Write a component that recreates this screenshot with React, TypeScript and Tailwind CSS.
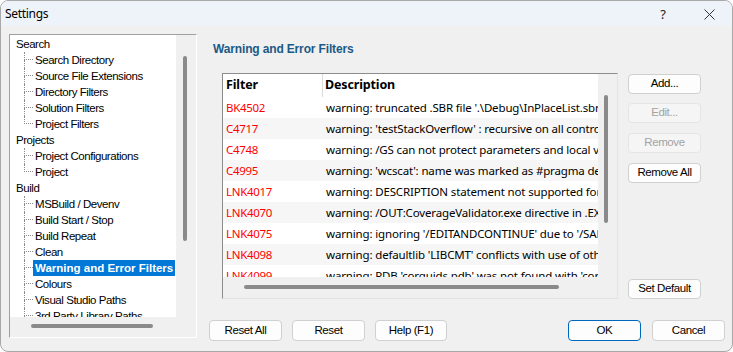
import React from "react";

type Group = { label: string; children: string[]; continues?: boolean };

const tree: Group[] = [
  {
    label: "Search",
    children: ["Search Directory", "Source File Extensions", "Directory Filters", "Solution Filters", "Project Filters"],
  },
  { label: "Projects", children: ["Project Configurations", "Project"] },
  {
    label: "Build",
    children: [
      "MSBuild / Devenv",
      "Build Start / Stop",
      "Build Repeat",
      "Clean",
      "Warning and Error Filters",
      "Colours",
      "Visual Studio Paths",
      "3rd Party Library Paths",
    ],
    continues: true,
  },
];

const rows: [string, string][] = [
  ["BK4502", "warning: truncated .SBR file '.\\Debug\\InPlaceList.sbr' not in InPlaceList.bsc"],
  ["C4717", "warning: 'testStackOverflow' : recursive on all control paths, function will cause runtime stack overflow"],
  ["C4748", "warning: /GS can not protect parameters and local variables from local buffer overrun"],
  ["C4995", "warning: 'wcscat': name was marked as #pragma deprecated"],
  ["LNK4017", "warning: DESCRIPTION statement not supported for the target platform; ignored"],
  ["LNK4070", "warning: /OUT:CoverageValidator.exe directive in .EXP differs from output filename"],
  ["LNK4075", "warning: ignoring '/EDITANDCONTINUE' due to '/SAFESEH' specification"],
  ["LNK4098", "warning: defaultlib 'LIBCMT' conflicts with use of other libs; use /NODEFAULTLIB:library"],
  ["LNK4099", "warning: PDB 'corguids.pdb' was not found with 'corguids.lib'"],
];

function Btn({ label, disabled, primary, className = "" }: { label: string; disabled?: boolean; primary?: boolean; className?: string }) {
  const base =
    "flex items-center justify-center rounded-[4px] border text-[11.5px] tracking-[-0.4px] font-['Liberation_Sans',Arial,sans-serif] leading-none";
  const look = disabled
    ? "bg-[#f5f5f5] border-[#e5e5e5] text-[#a3a3a3]"
    : primary
    ? "bg-[#fdfdfd] border-[#0067c0] text-black"
    : "bg-[#fdfdfd] border-[#d0d0d0] text-black";
  return <div className={`${base} ${look} ${className}`}>{label}</div>;
}

function TreeChild({ label, last, selected }: { label: string; last: boolean; selected: boolean }) {
  return (
    <div className="flex h-[16px] items-stretch">
      <div className="w-[14px] shrink-0" />
      <div className="flex w-[9px] shrink-0 flex-col">
        <div className="h-[8px] border-l border-b border-dotted border-[#8a8a8a]" />
        <div className={`flex-1 ${last ? "" : "border-l border-dotted border-[#8a8a8a]"}`} />
      </div>
      <div
        className={`whitespace-nowrap px-[2px] leading-[16px] ${
          selected ? "bg-[#0078d7] text-white font-bold tracking-[0px]" : "text-black"
        }`}
      >
        {label}
      </div>
    </div>
  );
}

export default function App() {
  return (
    <div className="flex h-[352px] w-[733px] flex-col overflow-hidden rounded-[8px] border border-[#a8a8a8] bg-[#f0f0f0]">
      {/* Title bar */}
      <div className="flex h-[25px] shrink-0 items-center bg-[#eef3f9]">
        <div className="pl-[4px] pt-[1px] font-['Noto_Sans',sans-serif] text-[12px] tracking-[-0.3px] text-black">Settings</div>
        <div className="ml-auto flex h-full">
          <div className="flex w-[46px] items-center justify-center pt-[2px] font-['Noto_Sans',sans-serif] text-[13px] text-[#222]">?</div>
          <div className="flex w-[46px] items-center justify-center pt-[2px]">
            <svg width="11" height="11" viewBox="0 0 11 11">
              <path d="M0.5 0.5 L10.5 10.5 M10.5 0.5 L0.5 10.5" stroke="#333" strokeWidth="1" fill="none" />
            </svg>
          </div>
        </div>
      </div>

      {/* Body */}
      <div className="flex flex-1 pt-[8px]">
        {/* Tree */}
        <div className="ml-[8px] flex h-[304px] w-[188px] shrink-0 flex-col border-t border-l border-r border-b border-t-[#a0a0a0] border-l-[#a0a0a0] border-r-white border-b-white">
          <div className="flex h-[282px]">
            <div className="w-[166px] overflow-hidden bg-white pt-[1px] font-['Liberation_Sans',Arial,sans-serif] text-[11.5px] tracking-[-0.45px]">
              {tree.map((g) => (
                <div key={g.label}>
                  <div className="h-[16px] pl-[6px] leading-[16px] text-black">{g.label}</div>
                  {g.children.map((c, i) => (
                    <TreeChild
                      key={c}
                      label={c}
                      last={!g.continues && i === g.children.length - 1}
                      selected={c === "Warning and Error Filters"}
                    />
                  ))}
                </div>
              ))}
            </div>
            <div className="w-[20px] bg-[#f0f0f0] pt-[21px] pl-[7px]">
              <div className="h-[185px] w-[4px] rounded-full bg-[#8a8a8a]" />
            </div>
          </div>
          <div className="h-[20px] bg-[#f0f0f0] pt-[7px] pl-[21px]">
            <div className="h-[4px] w-[122px] rounded-full bg-[#8a8a8a]" />
          </div>
        </div>

        {/* Right side */}
        <div className="ml-[12px] flex flex-1 flex-col pr-[7px]">
          <div className="pl-[4px] pt-[7px] font-['Liberation_Sans',Arial,sans-serif] text-[12px] font-bold leading-[16px] tracking-[-0.15px] text-[#1b5a87]">
            Warning and Error Filters
          </div>

          <div className="mt-[16px] flex h-[226px] pl-[13px]">
            {/* List */}
            <div className="flex h-[226px] w-[396px] shrink-0 flex-col border-t border-l border-r border-b border-t-[#8c8c8c] border-l-[#8c8c8c] border-r-[#e3e3e3] border-b-[#e3e3e3]">
              <div className="flex h-[203px]">
                <div className="w-[375px] overflow-hidden bg-white font-['Noto_Sans',sans-serif] text-[11.5px] tracking-[-0.15px]">
                  <div className="flex h-[23px] items-center bg-white font-bold text-black">
                    <div className="flex h-full w-[100px] shrink-0 items-center border-r border-[#dcdcdc] pl-[3px] text-[12.5px]">Filter</div>
                    <div className="pl-[2px] text-[12.5px]">Description</div>
                  </div>
                  {rows.map(([code, desc], i) => (
                    <div key={code} className={`flex h-[21px] items-center ${i % 2 === 0 ? "bg-white" : "bg-[#f6f6f6]"}`}>
                      <div className="w-[100px] shrink-0 pl-[3px] tracking-[-0.3px] text-[#ff0000]">{code}</div>
                      <div className="whitespace-nowrap pl-[3px] text-black">{desc}</div>
                    </div>
                  ))}
                </div>
                <div className="w-[19px] bg-[#f0f0f0] pt-[21px] pl-[6px]">
                  <div className="h-[128px] w-[4px] rounded-full bg-[#8a8a8a]" />
                </div>
              </div>
              <div className="h-[21px] bg-[#f0f0f0] pt-[8px] pl-[21px]">
                <div className="h-[4px] w-[315px] rounded-full bg-[#8a8a8a]" />
              </div>
            </div>

            {/* Side buttons */}
            <div className="ml-[10px] flex w-[73px] flex-col pt-[1px]">
              <Btn label="Add..." className="h-[20px]" />
              <Btn label="Edit..." disabled className="mt-[9px] h-[20px]" />
              <Btn label="Remove" disabled className="mt-[10px] h-[20px]" />
              <Btn label="Remove All" className="mt-[10px] h-[20px]" />
              <Btn label="Set Default" className="mt-auto h-[20px]" />
            </div>
          </div>

          {/* Bottom buttons */}
          <div className="mt-[21px] flex h-[21px]">
            <Btn label="Reset All" className="h-[21px] w-[73px]" />
            <Btn label="Reset" className="ml-[10px] h-[21px] w-[73px]" />
            <Btn label="Help (F1)" className="ml-[10px] h-[21px] w-[72px]" />
            <Btn label="OK" primary className="ml-auto h-[21px] w-[73px]" />
            <Btn label="Cancel" className="ml-[11px] h-[21px] w-[73px]" />
          </div>
        </div>
      </div>
    </div>
  );
}
